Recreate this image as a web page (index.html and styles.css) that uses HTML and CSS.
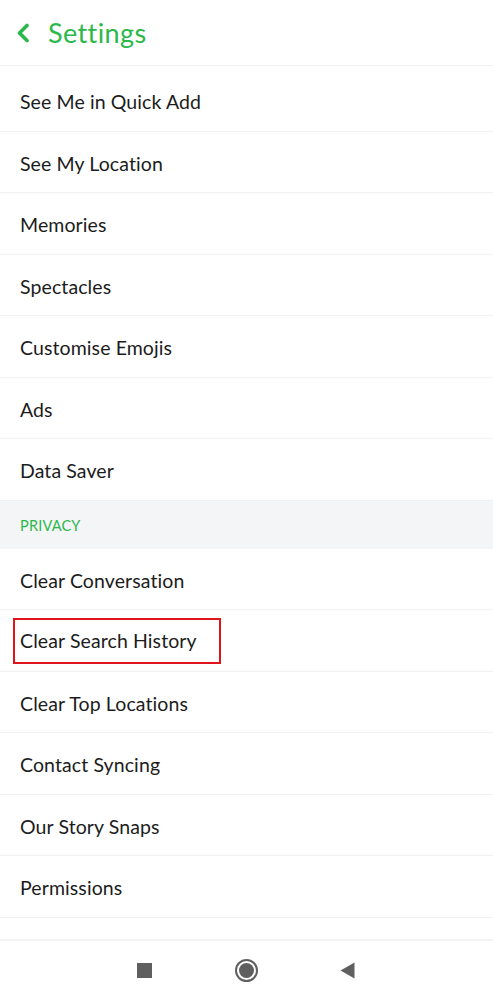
FILE: index.html
```html
<!DOCTYPE html>
<html>
<head>
<meta charset="utf-8">
<link rel="stylesheet" href="styles.css">
</head>
<body>
<div class="screen">
  <header class="topbar">
    <svg class="back" width="14" height="20" viewBox="0 0 14 20"><path d="M11 2.5 L3.5 10 L11 17.5" fill="none" stroke="#2bb84b" stroke-width="3.6" stroke-linecap="round" stroke-linejoin="round"/></svg>
    <h1 class="title">Settings</h1>
  </header>
  <main class="list">
    <div class="row">See Me in Quick Add</div>
    <div class="row">See My Location</div>
    <div class="row">Memories</div>
    <div class="row">Spectacles</div>
    <div class="row">Customise Emojis</div>
    <div class="row">Ads</div>
    <div class="row">Data Saver</div>
    <div class="section">PRIVACY</div>
    <div class="row">Clear Conversation</div>
    <div class="row"><span class="highlight">Clear Search History</span></div>
    <div class="row">Clear Top Locations</div>
    <div class="row">Contact Syncing</div>
    <div class="row">Our Story Snaps</div>
    <div class="row">Permissions</div>
    <div class="row filler"></div>
  </main>
  <nav class="navbar">
    <span class="nav-square"></span>
    <span class="nav-home"><span class="nav-dot"></span></span>
    <svg class="nav-back" width="15" height="17" viewBox="0 0 15 17"><path d="M14.5 0.5 L14.5 16.5 L0.5 8.5 Z" fill="#5f5f5f"/></svg>
  </nav>
</div>
</body>
</html>
```

FILE: styles.css
```css
* { box-sizing: border-box; }
html, body { margin: 0; padding: 0; background: #fff; }
body { font-family: Lato, "Noto Sans", sans-serif; color: #1c1c1c; }
.screen { width: 493px; height: 1000px; display: flex; flex-direction: column; overflow: hidden; }
.topbar { height: 66px; flex: none; display: flex; align-items: center; padding-left: 16px; border-bottom: 1px solid #f0f0f0; }
.title { margin: 0 0 0 18px; font-size: 27px; font-weight: 400; color: #2bb84b; letter-spacing: 0.4px; }
.list { flex: 1; display: flex; flex-direction: column; padding-top: 4px; overflow: hidden; }
.row { height: 61.5px; flex: none; display: flex; align-items: center; padding-left: 20px; font-size: 19.5px; letter-spacing: 0.1px; border-bottom: 1px solid #f1f1f1; padding-top: 3px; }
.row.filler { height: 22px; }
.section { height: 48px; flex: none; display: flex; align-items: center; padding-left: 20px; padding-top: 2px; background: #f4f5f7; color: #2bb84b; font-size: 14.5px; letter-spacing: 0.2px; }
.highlight { display: inline-flex; align-items: center; height: 46px; margin-left: -7px; margin-top: -2px; padding: 0 22px 0 5px; border: 2px solid #e0141b; }
.navbar { height: 60px; flex: none; display: flex; align-items: center; padding-left: 137px; border-top: 1px solid #f3f3f3; }
.nav-square { width: 15px; height: 15px; background: #5f5f5f; }
.nav-home { width: 23px; height: 23px; border: 2px solid #5f5f5f; border-radius: 50%; display: flex; align-items: center; justify-content: center; margin-left: 83px; }
.nav-dot { width: 15px; height: 15px; background: #5f5f5f; border-radius: 50%; }
.nav-back { margin-left: 82px; }
```
